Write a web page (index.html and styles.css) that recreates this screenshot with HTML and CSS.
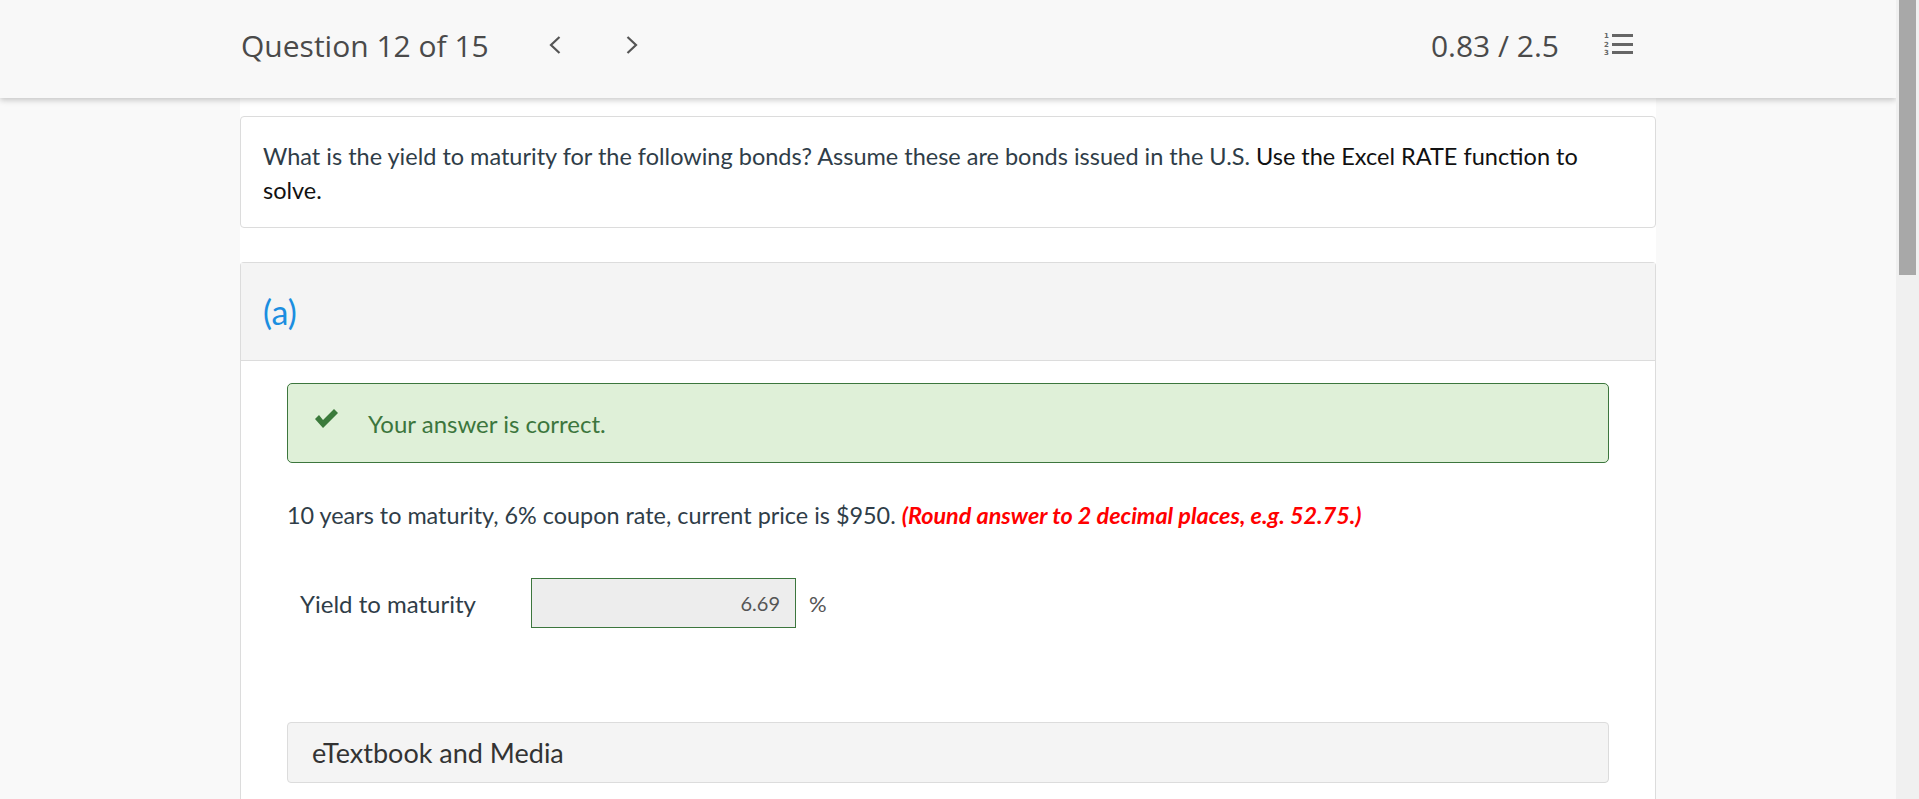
FILE: index.html
```html
<!DOCTYPE html>
<html lang="en">
<head>
<meta charset="utf-8">
<title>Question 12 of 15</title>
<link rel="stylesheet" href="styles.css">
</head>
<body>
<div class="window">
  <div class="viewport">
    <header class="topbar">
      <div class="topbar-inner">
        <div class="nav">
          <span class="qtitle">Question 12 of 15</span>
          <button class="chev chev-prev" aria-label="Previous">
            <svg width="12" height="20" viewBox="0 0 12 20"><path d="M10.5 2 L2 10 L10.5 18" fill="none" stroke="#555" stroke-width="2.2"/></svg>
          </button>
          <button class="chev" aria-label="Next">
            <svg width="12" height="20" viewBox="0 0 12 20"><path d="M1.5 2 L10 10 L1.5 18" fill="none" stroke="#555" stroke-width="2.2"/></svg>
          </button>
        </div>
        <div class="score">
          <span class="points">0.83 / 2.5</span>
          <svg class="listicon" width="32" height="28" viewBox="0 0 32 28">
            <g fill="#666">
              <rect x="10" y="3" width="21" height="3"/>
              <rect x="10" y="12" width="21" height="3"/>
              <rect x="10" y="20" width="21" height="3"/>
              <text x="2" y="7" font-family="DejaVu Sans, sans-serif" font-size="7" font-weight="bold">1</text>
              <text x="2" y="16" font-family="DejaVu Sans, sans-serif" font-size="7" font-weight="bold">2</text>
              <text x="2" y="24" font-family="DejaVu Sans, sans-serif" font-size="7" font-weight="bold">3</text>
            </g>
          </svg>
        </div>
      </div>
    </header>
    <main class="content">
      <section class="qcard">
        <p class="qtext">What is the yield to maturity for the following bonds? Assume these are bonds issued in the U.S. <span class="dark">Use the Excel RATE function to solve.</span></p>
      </section>
      <section class="part">
        <div class="part-head"><span class="part-label">(a)</span></div>
        <div class="part-body">
          <div class="alert">
            <svg class="check" width="27" height="22" viewBox="0 0 27 22"><path d="M2 11 L6 7 L10 12 L21 1 L25 5 L10 20 Z" fill="#3b7a3b"/></svg>
            <span>Your answer is correct.</span>
          </div>
          <p class="prompt">10 years to maturity, 6% coupon rate, current price is $950. <em class="hint">(Round answer to 2 decimal places, e.g. 52.75.)</em></p>
          <div class="answer-row">
            <span class="alabel">Yield to maturity</span>
            <div class="ainput">6.69</div>
            <span class="unit">%</span>
          </div>
          <div class="media">eTextbook and Media</div>
        </div>
      </section>
    </main>
  </div>
  <div class="scrollbar"><div class="thumb"></div></div>
</div>
</body>
</html>
```
FILE: styles.css
```css
html, body {
  margin: 0;
  padding: 0;
  height: 100%;
  overflow: hidden;
}
body {
  font-family: Lato, "Liberation Sans", sans-serif;
  background: #f9f9f9;
}
.window {
  display: flex;
  height: 799px;
}
.viewport {
  flex: 1;
  position: relative;
  overflow: hidden;
}
.scrollbar {
  width: 23px;
  background: #f0f0f0;
  display: flex;
  justify-content: center;
}
.thumb {
  width: 17px;
  height: 275px;
  background: #a8a8a8;
}
.topbar {
  position: absolute;
  top: 0;
  left: 0;
  right: 0;
  height: 98px;
  background: #f8f8f8;
  box-shadow: 0 2px 6px rgba(0, 0, 0, 0.22);
  z-index: 5;
}
.topbar-inner {
  width: 1416px;
  margin: 0 auto;
  height: 100%;
  display: flex;
  align-items: center;
  justify-content: space-between;
  box-sizing: border-box;
  padding: 0 22px 8px 1px;
  font-family: "Open Sans", sans-serif;
  color: #4a4a4a;
}
.nav {
  display: flex;
  align-items: center;
}
.qtitle {
  font-size: 30px;
  margin-right: 60px;
}
.chev {
  border: 0;
  background: none;
  padding: 0;
  width: 12px;
  height: 20px;
  display: flex;
}
.chev-prev {
  margin-right: 65px;
}
.score {
  display: flex;
  align-items: center;
}
.points {
  font-size: 30px;
  margin-right: 43px;
}
.listicon {
  display: block;
}
.content {
  width: 1416px;
  margin: 0 auto;
  background: #fff;
  padding-top: 116px;
  min-height: 799px;
  box-sizing: border-box;
}
.qcard {
  border: 1px solid #dcdcdc;
  border-radius: 4px;
  padding: 22px 22px 20px;
  margin-bottom: 34px;
}
.qtext {
  margin: 0;
  font-size: 23.5px;
  line-height: 34px;
  color: #2f3d48;
}
.dark {
  color: #111;
}
.part {
  border: 1px solid #dcdcdc;
  border-radius: 4px 4px 0 0;
  border-bottom: 0;
}
.part-head {
  background: #f4f4f4;
  height: 97px;
  border-bottom: 1px solid #dcdcdc;
  display: flex;
  align-items: center;
  padding-left: 22px;
}
.part-label {
  color: #1b8ee0;
  font-size: 34px;
}
.part-body {
  padding: 22px 46px 40px;
}
.alert {
  background: #dff0d8;
  border: 1px solid #3c763d;
  border-radius: 5px;
  height: 80px;
  box-sizing: border-box;
  display: flex;
  align-items: center;
  padding-left: 25px;
  color: #3c763d;
  font-size: 24px;
}
.check {
  margin-right: 28px;
  margin-top: -8px;
}
.prompt {
  margin: 35px 0 0;
  font-size: 23.4px;
  line-height: 34px;
  color: #2f3d48;
}
.hint {
  color: #ff0000;
  font-weight: bold;
  font-style: italic;
}
.answer-row {
  display: flex;
  align-items: center;
  margin-top: 46px;
  padding-left: 13px;
}
.alabel {
  font-size: 24px;
  color: #2f3d48;
  width: 231px;
}
.ainput {
  width: 265px;
  height: 50px;
  box-sizing: border-box;
  border: 1px solid #3c763d;
  background: #ededed;
  display: flex;
  align-items: center;
  justify-content: flex-end;
  padding-right: 15px;
  font-size: 20px;
  color: #555;
}
.unit {
  margin-left: 13px;
  font-size: 22px;
  color: #555;
}
.media {
  margin-top: 94px;
  background: #f4f4f4;
  border: 1px solid #dcdcdc;
  border-radius: 4px;
  height: 61px;
  box-sizing: border-box;
  display: flex;
  align-items: center;
  padding-left: 24px;
  font-size: 27px;
  color: #333;
}
```
